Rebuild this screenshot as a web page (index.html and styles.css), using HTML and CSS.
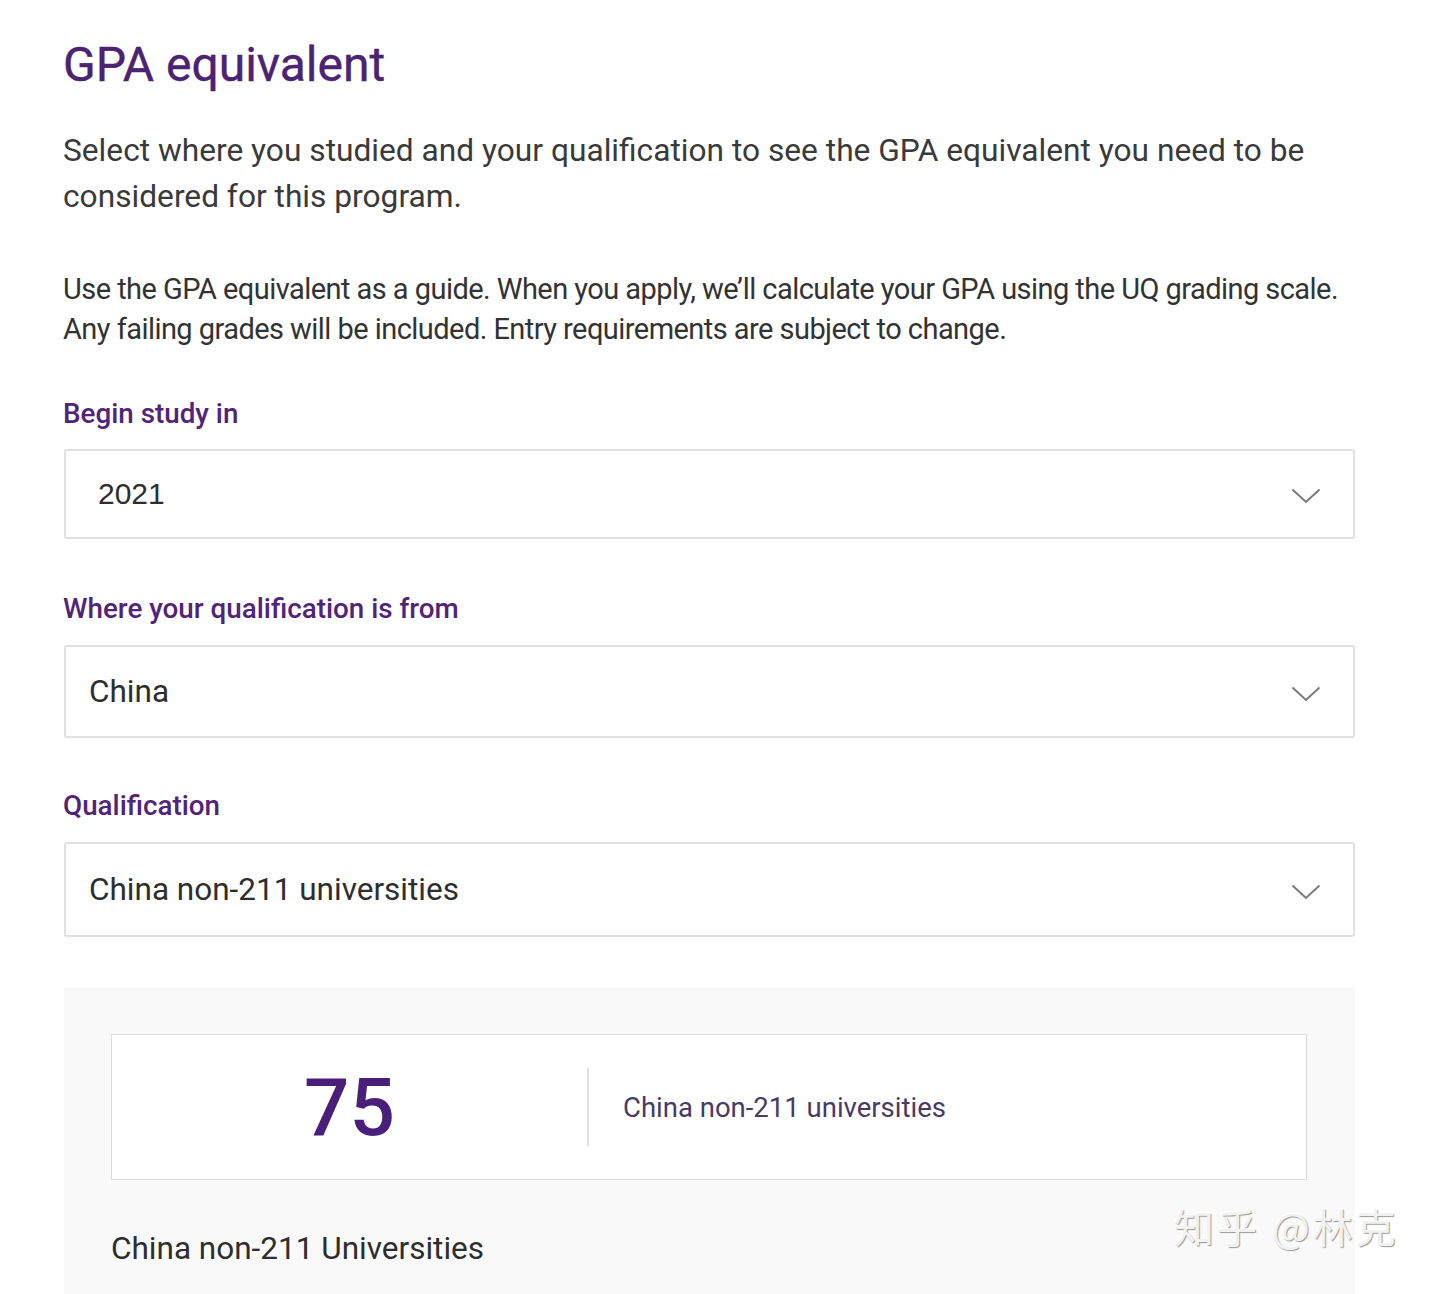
FILE: index.html
```html
<!DOCTYPE html>
<html lang="en">
<head>
<meta charset="utf-8">
<title>GPA equivalent</title>
<link rel="stylesheet" href="styles.css">
</head>
<body>
<main class="page">
  <h1 class="title">GPA equivalent</h1>
  <p class="lead">Select where you studied and your qualification to see the GPA equivalent you need to be considered for this program.</p>
  <p class="note">Use the GPA equivalent as a guide. When you apply, we’ll calculate your GPA using the UQ grading scale. Any failing grades will be included. Entry requirements are subject to change.</p>

  <div class="field field-first">
    <div class="label">Begin study in</div>
    <div class="select select-year">
      <span class="select-value year">2021</span>
      <svg class="chev" width="30" height="16" viewBox="0 0 30 16"><path d="M1.5 1.5 L15 14 L28.5 1.5" fill="none" stroke="#7a7a7a" stroke-width="2"/></svg>
    </div>
  </div>

  <div class="field">
    <div class="label">Where your qualification is from</div>
    <div class="select select-country">
      <span class="select-value">China</span>
      <svg class="chev" width="30" height="16" viewBox="0 0 30 16"><path d="M1.5 1.5 L15 14 L28.5 1.5" fill="none" stroke="#7a7a7a" stroke-width="2"/></svg>
    </div>
  </div>

  <div class="field field-qual">
    <div class="label">Qualification</div>
    <div class="select select-qual">
      <span class="select-value">China non-211 universities</span>
      <svg class="chev" width="30" height="16" viewBox="0 0 30 16"><path d="M1.5 1.5 L15 14 L28.5 1.5" fill="none" stroke="#7a7a7a" stroke-width="2"/></svg>
    </div>
  </div>

  <section class="result">
    <div class="result-card">
      <div class="score-col"><span class="score">75</span></div>
      <div class="divider"></div>
      <div class="result-name">China non-211 universities</div>
    </div>
    <div class="result-foot">China non-211 Universities</div>
  </section>
</main>
<div class="watermark">知乎 @林克</div>
</body>
</html>
```
FILE: styles.css
```css
html, body {
  margin: 0;
  padding: 0;
  background: #ffffff;
}
body {
  font-family: Roboto, "Noto Sans", "Liberation Sans", sans-serif;
  color: #333333;
  height: 1294px;
  overflow: hidden;
  position: relative;
}
.page {
  width: 1291px;
  margin-left: 64px;
}
.title {
  margin: 35px 0 0 -1px;
  font-size: 48px;
  line-height: 60px;
  font-weight: 400;
  color: #4b2372;
  -webkit-text-stroke: 0.4px #4b2372;
}
.lead {
  margin: 33px 0 0 -1px;
  font-size: 31.7px;
  line-height: 46px;
  color: #3a3a3a;
  width: 1280px;
}
.note {
  margin: 49px 0 0 -1px;
  font-size: 29px;
  line-height: 40px;
  letter-spacing: -0.55px;
  color: #333333;
}
.field {
  margin-top: 54px;
}
.field-first {
  margin-top: 49px;
}
.field-qual {
  margin-top: 52px;
}
.label {
  font-size: 27.8px;
  line-height: 32px;
  font-weight: 500;
  color: #51247a;
  margin-left: -1px;
}
.select {
  margin-top: 20px;
  height: 90px;
  border: 2px solid #e1e1e1;
  border-radius: 3px;
  box-sizing: border-box;
  display: flex;
  align-items: center;
  justify-content: space-between;
  padding: 0 32px 0 23px;
}
.select-year {
  margin-top: 19px;
  padding-left: 32px;
}
.select-country {
  height: 93px;
}
.select-qual {
  height: 95px;
}
.select-value {
  font-size: 31.5px;
  color: #2e2e2e;
}
.year {
  font-family: "Liberation Sans", Arial, sans-serif;
  font-size: 30px;
}
.chev {
  display: block;
  margin-top: 4px;
}
.result {
  margin-top: 50px;
  background: #f9f9f9;
  padding: 47px 48px 40px 47px;
  height: 400px;
}
.result-card {
  background: #ffffff;
  border: 1px solid #dcdcdc;
  height: 146px;
  box-sizing: border-box;
  display: flex;
  align-items: center;
}
.score-col {
  width: 475px;
  display: flex;
  justify-content: center;
}
.score {
  font-size: 80px;
  font-weight: 500;
  color: #4a1f7a;
  line-height: 1;
  margin-top: 2px;
}
.divider {
  width: 2px;
  height: 78px;
  background: #e0e0e0;
}
.result-name {
  margin-left: 34px;
  font-size: 27.5px;
  color: #4a3a66;
}
.result-foot {
  margin-top: 50px;
  font-size: 31.5px;
  color: #2e2e2e;
}
.watermark {
  position: absolute;
  left: 1174px;
  top: 1197px;
  font-family: "Noto Sans CJK SC", sans-serif;
  font-size: 40px;
  color: #f2f2f2;
  text-shadow: 1px 1px 1px #9a9a9a, -1px -1px 0 #ffffff;
  letter-spacing: 3px;
}
```
